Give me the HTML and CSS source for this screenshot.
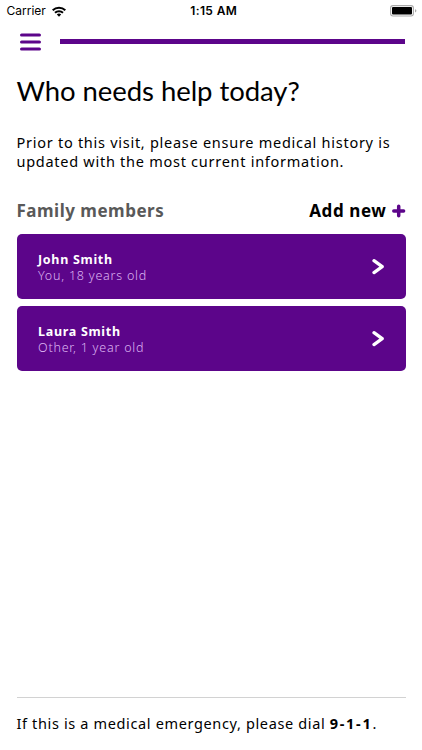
FILE: index.html
```html
<!DOCTYPE html>
<html lang="en">
<head>
<meta charset="utf-8">
<meta name="viewport" content="width=device-width, initial-scale=1">
<title>Who needs help today?</title>
<link rel="stylesheet" href="styles.css">
</head>
<body>
<div class="screen">
  <header class="status">
    <div class="carrier"><span>Carrier</span>
      <svg class="wifi" viewBox="0 0 14 11" width="14" height="11"><g fill="none" stroke="#000" stroke-width="2"><path d="M.7 4.2a9 9 0 0 1 12.6 0"/><path d="M3 6.8a5.8 5.8 0 0 1 8 0"/></g><path d="M4.8 8.5a3.2 3.2 0 0 1 4.4 0L7 10.7z"/></svg>
    </div>
    <time class="clock">1:15 AM</time>
    <svg class="battery" viewBox="0 0 27 12" width="27" height="12"><rect x=".6" y=".6" width="22.8" height="10.4" rx="2.4" fill="#fff" stroke="#aaa" stroke-width="1.1"/><rect x="2" y="2" width="20" height="7.6" rx="1"/><path d="M25 4.2q1.4.4 1.4 1.6T25 7.4z" fill="#aaa"/></svg>
  </header>
  <nav class="topbar">
    <svg class="menu" viewBox="0 0 21 18" width="21" height="18"><path d="M1.600 2h17.800M1.600 9h17.800M1.600 16h17.800" stroke="#5c058a" stroke-width="3.200" stroke-linecap="round"/></svg>
    <div class="progress"></div>
  </nav>
  <main class="content">
    <h1 class="title">Who needs help today?</h1>
    <p class="intro">Prior to this visit, please ensure medical history is<br>updated with the most current information.</p>
    <div class="section">
      <h2 class="label">Family members</h2>
      <a class="add"><span>Add new</span>
        <svg viewBox="0 0 14 14" width="14" height="14"><path d="M6.700 2.200v9.600M1.800 7h9.800" stroke="#5c058a" stroke-width="3.500" stroke-linecap="round"/></svg>
      </a>
    </div>
    <div class="members">
      <a class="card"><div class="person"><div class="name">John Smith</div><div class="detail">You, 18 years old</div></div>
        <svg viewBox="0 0 14 18" width="14" height="18"><path d="M2 2.700 10.200 8.700l-8.200 5.900" fill="none" stroke="#fff" stroke-width="3.300" stroke-linecap="round" stroke-linejoin="round"/></svg></a>
      <a class="card"><div class="person"><div class="name">Laura Smith</div><div class="detail">Other, 1 year old</div></div>
        <svg viewBox="0 0 14 18" width="14" height="18"><path d="M2 2.700 10.200 8.700l-8.200 5.900" fill="none" stroke="#fff" stroke-width="3.300" stroke-linecap="round" stroke-linejoin="round"/></svg></a>
    </div>
  </main>
  <footer class="emergency">If this is a medical emergency, please dial <b>9-1-1</b>.</footer>
</div>
</body>
</html>
```
FILE: styles.css
```css
* { box-sizing: border-box; margin: 0; padding: 0; }
body { background: #fff; color: #000; font-family: "Noto Sans", sans-serif; }
.screen { width: 422px; height: 750px; display: flex; flex-direction: column; overflow: hidden; }
.status { height: 22px; padding: 0 5px 0 6.500px; display: grid; grid-template-columns: 1fr auto 1fr; align-items: center; font-family: Inter, sans-serif; font-size: 12px; line-height: 22px; }
.carrier { display: flex; align-items: center; gap: 6px; }
.clock { font-weight: 600; letter-spacing: .35px; margin-left: 4px; }
.battery { justify-self: end; }
.topbar { height: 40px; padding: 0 16.600px 1px 20px; display: flex; align-items: center; gap: 19.400px; }
.menu { margin-top: 1px; }
.progress { flex: 1; height: 5px; background: #5c058a; }
.content { flex: 1; padding: 0 16.500px; }
.title { height: 60px; line-height: 58px; font-family: Lato, sans-serif; font-size: 27.500px; font-weight: 400; letter-spacing: -.06px; }
.intro { margin-top: 11px; font-size: 14.500px; line-height: 19px; letter-spacing: .73px; white-space: nowrap; }
.section { margin-top: 28px; height: 24px; display: flex; align-items: center; justify-content: space-between; }
.label, .add { font-size: 17px; line-height: 24px; font-weight: 700; letter-spacing: .5px; }
.label { color: #595959; }
.add { display: flex; align-items: center; gap: 5px; letter-spacing: .6px; }
.members { margin-top: 11px; display: flex; flex-direction: column; gap: 7px; }
.card { height: 65px; padding: 1px 20px 0 21.500px; display: flex; align-items: center; justify-content: space-between; border-radius: 5px; background: #5c058a; color: #fff; }
.person { padding-top: 2px; }
.name { font-size: 12.500px; line-height: 16px; font-weight: 700; letter-spacing: .7px; }
.detail { font-size: 12.500px; line-height: 16px; font-weight: 300; letter-spacing: .78px; color: #dcb5f2; }
.emergency { height: 53px; margin: 0 16.500px; border-top: 1px solid #d2d2d2; font-size: 14.500px; line-height: 51px; letter-spacing: .64px; white-space: nowrap; }
.emergency b { letter-spacing: 1.700px; }
```
